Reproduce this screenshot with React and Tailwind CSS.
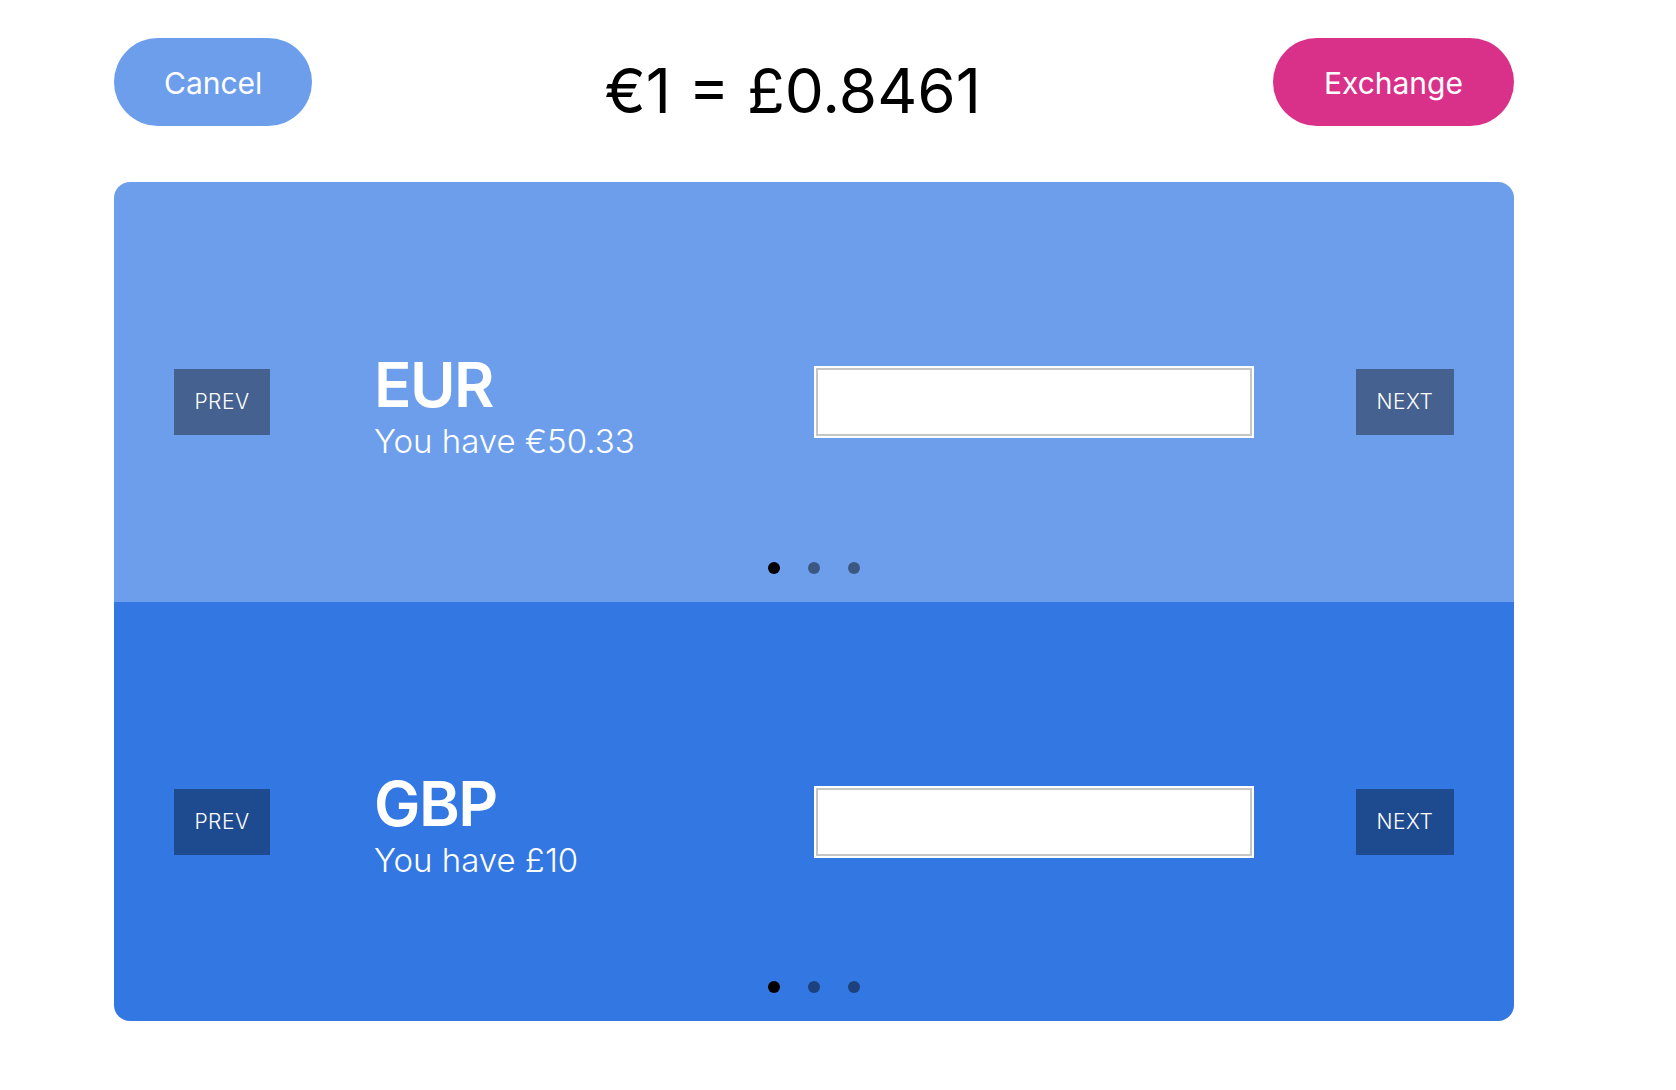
import React from 'react';

const wallets = [
  { code: 'EUR', balance: 'You have €50.33', bg: 'bg-[#6d9eeb]', btn: 'bg-[#44618f]', h: 'h-[420px]' },
  { code: 'GBP', balance: 'You have £10', bg: 'bg-[#3377e3]', btn: 'bg-[#1e4a8f]', h: 'h-[419px]' },
];

const Dots = () => (
  <div className="flex justify-center gap-[28px] pb-[28px]">
    <span className="w-3 h-3 rounded-full bg-black" />
    <span className="w-3 h-3 rounded-full bg-black/45" />
    <span className="w-3 h-3 rounded-full bg-black/45" />
  </div>
);

const WalletSlide = ({ wallet }) => (
  <div className={`${wallet.bg} ${wallet.h} flex flex-col`}>
    <div className="flex-1 flex items-center px-[60px] pt-[60px]">
      <button className={`${wallet.btn} h-[66px] w-[96px] text-white text-[21px] font-light tracking-wide`}>
        PREV
      </button>
      <div className="flex-1 grid grid-cols-2 items-center ml-[104px] mr-[102px]">
        <div className="text-white pt-[12px]">
          <div className="text-[62px] font-semibold leading-none tracking-tight">{wallet.code}</div>
          <div className="text-[33px] font-light leading-tight mt-[5px]">{wallet.balance}</div>
        </div>
        <input
          type="text"
          className="h-[72px] w-full bg-white border-2 border-white shadow-[inset_0_0_0_2px_#c6c6c6] outline-none"
        />
      </div>
      <button className={`${wallet.btn} h-[66px] w-[98px] text-white text-[21px] font-light tracking-wide`}>
        NEXT
      </button>
    </div>
    <Dots />
  </div>
);

export default function App() {
  return (
    <div className="min-h-screen bg-white font-['Inter',sans-serif] pl-[114px] pt-[38px]">
      <div className="w-[1400px]">
        {/* Header */}
        <header className="flex items-start justify-between">
          <button className="h-[88px] px-[50px] pt-[3px] rounded-full bg-[#6d9eeb] text-white text-[30px]">
            Cancel
          </button>
          <h1 className="text-[62px] leading-none text-black mt-[22px]">€1 = £0.8461</h1>
          <button className="h-[88px] px-[51px] pt-[3px] rounded-full bg-[#d9318a] text-white text-[30px]">
            Exchange
          </button>
        </header>

        {/* Wallets */}
        <div className="mt-[56px] rounded-2xl overflow-hidden">
          {wallets.map((w) => (
            <WalletSlide key={w.code} wallet={w} />
          ))}
        </div>
      </div>
    </div>
  );
}
